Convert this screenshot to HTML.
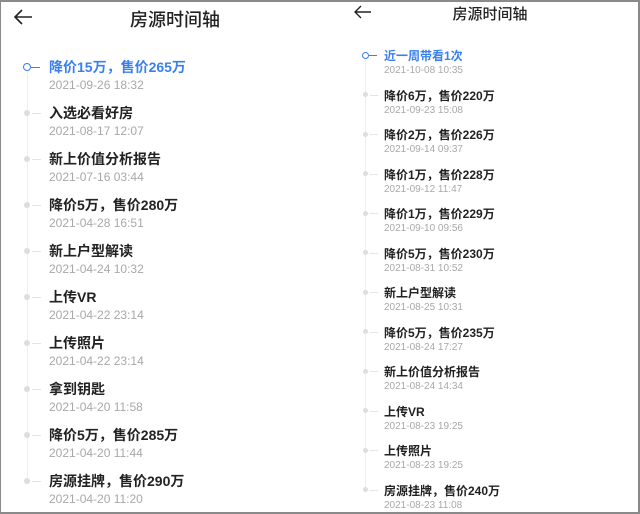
<!DOCTYPE html>
<html><head><meta charset="utf-8"><style>
*{margin:0;padding:0;box-sizing:border-box}
body{width:640px;height:514px;background:#fff;position:relative;overflow:hidden;font-family:"Liberation Sans","Noto Sans CJK SC",sans-serif}
.frame{position:absolute;left:0;top:0;width:640px;height:514px;border:2px solid #8a8a8a;border-left-width:1px}
.t{position:absolute;white-space:nowrap;color:#222;font-weight:600}
.d{position:absolute;white-space:nowrap;color:#a8a8a8}
.vl{position:absolute;width:1px;background:#eee}
.dot{position:absolute;border-radius:50%;background:#ddd}
.dash{position:absolute;height:1px;background:#e4e4e4}
.ring{position:absolute;border-radius:50%;border:1.5px solid #3a7ff0;background:#fff}
</style></head><body>
<div class="frame"></div>
<svg style="position:absolute;left:13px;top:9px" width="20" height="16" viewBox="0 0 20 16"><path d="M9 1L2 8L9 15M2 8H19" fill="none" stroke="#222" stroke-width="1.6"/></svg>
<div class="t" style="left:0;width:350px;text-align:center;top:6px;font-size:18px;font-weight:500">房源时间轴</div>
<svg style="position:absolute;left:354px;top:5px" width="18" height="14" viewBox="0 0 18 14"><path d="M7 1L1 7L7 13M1 7H17" fill="none" stroke="#222" stroke-width="1.4"/></svg>
<div class="t" style="left:330px;width:320px;text-align:center;top:3px;font-size:15px;font-weight:500">房源时间轴</div>
<div class="vl" style="left:27px;top:70px;height:412px"></div>
<div class="vl" style="left:365px;top:58px;height:432px"></div>
<div id="L"></div><div id="R"></div>
<script>
var L=[["降价15万，售价265万","2021-09-26 18:32"],["入选必看好房","2021-08-17 12:07"],["新上价值分析报告","2021-07-16 03:44"],["降价5万，售价280万","2021-04-28 16:51"],["新上户型解读","2021-04-24 10:32"],["上传VR","2021-04-22 23:14"],["上传照片","2021-04-22 23:14"],["拿到钥匙","2021-04-20 11:58"],["降价5万，售价285万","2021-04-20 11:44"],["房源挂牌，售价290万","2021-04-20 11:20"]];
var R=[["近一周带看1次","2021-10-08 10:35"],["降价6万，售价220万","2021-09-23 15:08"],["降价2万，售价226万","2021-09-14 09:37"],["降价1万，售价228万","2021-09-12 11:47"],["降价1万，售价229万","2021-09-10 09:56"],["降价5万，售价230万","2021-08-31 10:52"],["新上户型解读","2021-08-25 10:31"],["降价5万，售价235万","2021-08-24 17:27"],["新上价值分析报告","2021-08-24 14:34"],["上传VR","2021-08-23 19:25"],["上传照片","2021-08-23 19:25"],["房源挂牌，售价240万","2021-08-23 11:08"]];
var h="";
L.forEach(function(e,i){var y=67+i*46;var b=i==0;
h+=b?'<div class="ring" style="left:23px;top:'+(y-4)+'px;width:8px;height:8px"></div><div class="dash" style="left:31px;top:'+y+'px;width:9px;background:#3a7ff0"></div>':'<div class="dot" style="left:24px;top:'+(y-3)+'px;width:6px;height:6px"></div><div class="dash" style="left:32px;top:'+y+'px;width:9px"></div>';
h+='<div class="t" style="left:49px;top:'+(y-10)+'px;font-size:14px;'+(b?'color:#3a7ff0':'')+'">'+e[0]+'</div><div class="d" style="left:49px;top:'+(y+11)+'px;font-size:12px">'+e[1]+'</div>';});
R.forEach(function(e,i){var y=55+i*39.5;var b=i==0;
h+=b?'<div class="ring" style="left:362px;top:'+(y-3.5)+'px;width:7px;height:7px"></div><div class="dash" style="left:369px;top:'+y+'px;width:8px;background:#3a7ff0"></div>':'<div class="dot" style="left:363px;top:'+(y-2.5)+'px;width:5px;height:5px"></div><div class="dash" style="left:370px;top:'+y+'px;width:8px"></div>';
h+='<div class="t" style="left:384px;top:'+(y-8)+'px;font-size:12px;'+(b?'color:#3a7ff0':'')+'">'+e[0]+'</div><div class="d" style="left:384px;top:'+(y+10)+'px;font-size:10px">'+e[1]+'</div>';});
document.getElementById("L").innerHTML=h;
</script>
</body></html>
